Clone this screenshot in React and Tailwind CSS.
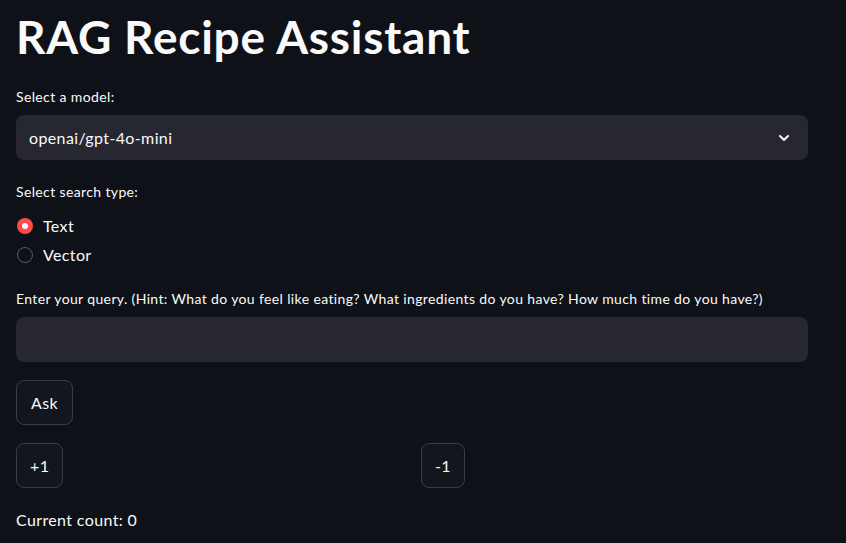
import React, { useState } from "react";

export default function App() {
  const [mode, setMode] = useState("Text");
  const [count, setCount] = useState(0);

  return (
    <div className="min-h-screen bg-[#0e1117] text-[#fafafa] font-['Lato','Noto_Sans',sans-serif] tracking-[0.37px] px-4 overflow-hidden">
      <div className="w-[792px] flex flex-col">
        <h1 className="text-[46px] font-bold leading-[1.2] tracking-[0.75px] pt-[9px] pb-[23px]">RAG Recipe Assistant</h1>

        <label className="text-[14px] leading-[20px] mb-[8px]">Select a model:</label>
        <div className="h-[45px] rounded-lg bg-[#262730] flex items-center justify-between pl-[13px] pr-[16px]">
          <span className="text-[16px]">openai/gpt-4o-mini</span>
          <svg width="16" height="16" viewBox="0 0 24 24" fill="none" stroke="#fafafa" strokeWidth="3" strokeLinecap="round" strokeLinejoin="round">
            <path d="M6 9l6 6 6-6" />
          </svg>
        </div>

        <label className="text-[14px] leading-[20px] mt-[22px] mb-[12px]">Select search type:</label>
        <div className="flex flex-col gap-[5px]">
          {["Text", "Vector"].map((opt) => (
            <button key={opt} onClick={() => setMode(opt)} className="flex items-center gap-[10px] h-[24px] text-left">
              {mode === opt ? (
                <span className="w-4 h-4 rounded-full bg-[#ff4b4b] flex items-center justify-center ml-[1px]">
                  <span className="w-[6px] h-[6px] rounded-full bg-white" />
                </span>
              ) : (
                <span className="w-4 h-4 rounded-full border border-[#5a5c63] ml-[1px]" />
              )}
              <span className="text-[16px]">{opt}</span>
            </button>
          ))}
        </div>

        <label className="text-[14px] leading-[20px] mt-[22px] mb-[8px]">
          Enter your query. (Hint: What do you feel like eating? What ingredients do you have? How much time do you have?)
        </label>
        <input className="h-[45px] rounded-lg bg-[#262730] outline-none px-[13px] text-[16px]" />

        <div className="mt-[18px]">
          <button className="h-[45px] px-[14px] rounded-lg border border-[#3b3d44] bg-[#13161d] text-[16px]">Ask</button>
        </div>

        <div className="grid grid-cols-2 gap-4 mt-[18px]">
          <div>
            <button onClick={() => setCount(count + 1)} className="h-[45px] px-[13px] rounded-lg border border-[#3b3d44] bg-[#13161d] text-[16px]">+1</button>
          </div>
          <div className="pl-[1px]">
            <button onClick={() => setCount(count - 1)} className="h-[45px] px-[13px] rounded-lg border border-[#3b3d44] bg-[#13161d] text-[16px]">-1</button>
          </div>
        </div>

        <p className="text-[16px] leading-[24px] mt-[20px]">Current count: {count}</p>
      </div>
    </div>
  );
}
